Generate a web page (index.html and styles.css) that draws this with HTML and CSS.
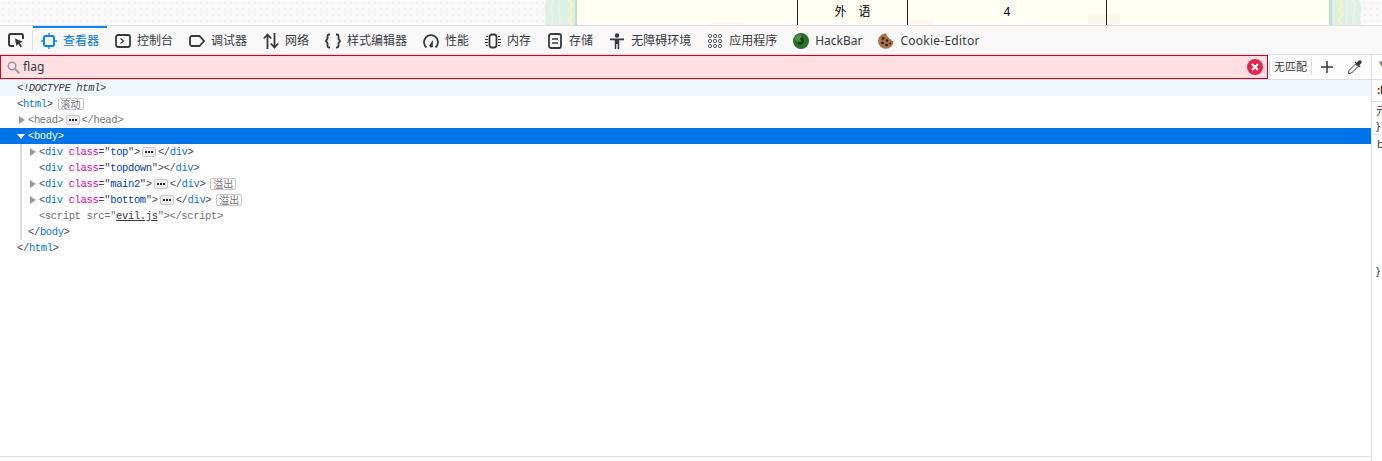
FILE: index.html
```html
<!DOCTYPE html>
<html lang="zh-CN">
<head>
<meta charset="utf-8">
<title>查看器</title>
<link rel="stylesheet" href="styles.css">
</head>
<body>
<div class="strip">
  <div class="side side-l"></div>
  <div class="band">
    <svg width="33" height="25" viewBox="0 0 33 25"><path d="M3 0C1 4 0 8 1 12s1 8 0 13h32V0z" fill="#dcf0e6"/><path d="M9 0c-2 4-2 8-1 12s1 9 0 13M16 0c-2 4-2 8-1 12s1 9 0 13" fill="none" stroke="#e6f4ec" stroke-width="2"/><path d="M25 0l3 5-3 5 3 5-3 5 3 5" fill="none" stroke="#f1f5c6" stroke-width="3"/><rect x="31" width="2" height="25" fill="#b9e2cf"/></svg>
  </div>
  <div class="sheet">
    <div class="cell cell-a"></div>
    <div class="cell cell-b"><span class="spaced">外</span><span>语</span></div>
    <div class="cell cell-c">4</div>
    <div class="cell cell-d"></div>
  </div>
  <div class="band band-r">
    <svg width="33" height="25" viewBox="0 0 33 25"><path d="M3 0C1 4 0 8 1 12s1 8 0 13h32V0z" fill="#dcf0e6"/><path d="M9 0c-2 4-2 8-1 12s1 9 0 13M16 0c-2 4-2 8-1 12s1 9 0 13" fill="none" stroke="#e6f4ec" stroke-width="2"/><path d="M23 0l-3 5 3 5-3 5 3 5-3 5" fill="none" stroke="#f1f5c6" stroke-width="3"/><rect x="30" width="3" height="25" fill="#b9e2cf"/></svg>
  </div>
  <div class="side side-r"></div>
</div>

<nav class="toolbar">
  <button class="picker" aria-label="picker">
    <svg width="16" height="16" viewBox="0 0 16 16"><path d="M6 14H3a2 2 0 0 1-2-2V4a2 2 0 0 1 2-2h10a2 2 0 0 1 2 2v3" fill="none" stroke="#38383d" stroke-width="2"/><path d="M7 6.500l8 3.200-3.200 1.300 2.200 3.200-1.600 1.100-2.200-3.200L8.300 14z" fill="#38383d"/></svg>
  </button>
  <div class="tab active">
    <svg width="16" height="16" viewBox="0 0 16 16"><rect x="3" y="3" width="10" height="10" rx="1.500" fill="none" stroke="#0a84ff" stroke-width="2"/><path d="M8 0v3M8 13v3M0 8h3M13 8h3" stroke="#0a84ff" stroke-width="1.400"/></svg>
    <span>查看器</span>
  </div>
  <div class="tab">
    <svg width="16" height="16" viewBox="0 0 16 16"><rect x="1" y="2" width="14" height="12" rx="2" fill="none" stroke="#38383d" stroke-width="1.800"/><path d="M5.500 5.500L8.500 8l-3 2.500" fill="none" stroke="#38383d" stroke-width="1.200"/></svg>
    <span>控制台</span>
  </div>
  <div class="tab">
    <svg width="16" height="16" viewBox="0 0 16 16"><path d="M3 3h7.500L15 8l-4.500 5H3a2 2 0 0 1-2-2V5a2 2 0 0 1 2-2z" fill="none" stroke="#38383d" stroke-width="1.800"/></svg>
    <span>调试器</span>
  </div>
  <div class="tab">
    <svg width="16" height="16" viewBox="0 0 16 16"><path d="M4.500 16V2M.8 5.500l3.700-4 3.700 4M11.500 0v14M7.800 10.500l3.700 4 3.700-4" fill="none" stroke="#38383d" stroke-width="1.800"/></svg>
    <span>网络</span>
  </div>
  <div class="tab">
    <svg width="16" height="16" viewBox="0 0 16 16"><path d="M5 1.500H4A1.500 1.500 0 0 0 2.500 3v3L1 8l1.500 2v3A1.500 1.500 0 0 0 4 14.500h1M11 1.500h1A1.500 1.500 0 0 1 13.500 3v3L15 8l-1.500 2v3a1.500 1.500 0 0 1-1.500 1.500h-1" fill="none" stroke="#38383d" stroke-width="1.800"/></svg>
    <span>样式编辑器</span>
  </div>
  <div class="tab">
    <svg width="16" height="16" viewBox="0 0 16 16"><path d="M3.500 14.500A7 7 0 1 1 12.500 14.500" fill="none" stroke="#38383d" stroke-width="1.800"/><path d="M6.300 12.800L9.800 7l.1 6.500a1.900 1.900 0 0 1-3.600-.7z" fill="#38383d"/></svg>
    <span>性能</span>
  </div>
  <div class="tab">
    <svg width="16" height="16" viewBox="0 0 16 16"><rect x="4.500" y="1.500" width="7" height="13" rx="2.500" fill="none" stroke="#38383d" stroke-width="1.800"/><path d="M1 3.500h2M0 6.500h3M0 9.500h3M1 12.500h2M13 3.500h2M13 6.500h3M13 9.500h3M13 12.500h2" stroke="#38383d" stroke-width="1"/></svg>
    <span>内存</span>
  </div>
  <div class="tab">
    <svg width="16" height="16" viewBox="0 0 16 16"><rect x="2" y="1" width="12" height="14" rx="2" fill="none" stroke="#38383d" stroke-width="1.800"/><path d="M5 6h6M5 10h6" stroke="#38383d" stroke-width="1.300"/></svg>
    <span>存储</span>
  </div>
  <div class="tab">
    <svg width="16" height="16" viewBox="0 0 16 16"><circle cx="8" cy="2.500" r="2.200" fill="#38383d"/><path d="M1 5.500h14v1.800H10.200V16H8.700v-5H7.300v5H5.800V7.300H1z" fill="#38383d"/></svg>
    <span>无障碍环境</span>
  </div>
  <div class="tab">
    <svg width="16" height="16" viewBox="0 0 16 16" fill="none" stroke="#38383d" stroke-width="1"><rect x="1.500" y="1.500" width="3" height="3" rx="1.200"/><rect x="6.500" y="1.500" width="3" height="3" rx="1.200"/><rect x="11.500" y="1.500" width="3" height="3" rx="1.200"/><rect x="1.500" y="6.500" width="3" height="3" rx="1.200"/><rect x="6.500" y="6.500" width="3" height="3" rx="1.200"/><rect x="11.500" y="6.500" width="3" height="3" rx="1.200"/><rect x="1.500" y="11.500" width="3" height="3" rx="1.200"/><rect x="6.500" y="11.500" width="3" height="3" rx="1.200"/><rect x="11.500" y="11.500" width="3" height="3" rx="1.200"/></svg>
    <span>应用程序</span>
  </div>
  <div class="tab">
    <svg width="16" height="16" viewBox="0 0 16 16"><circle cx="8" cy="8" r="8" fill="#2c6e2a"/><circle cx="5.500" cy="5.500" r="3.500" fill="#4a8f3c"/><path d="M4.500 8.500c2 1 4.500.5 6.500-2 .2 3-1.600 5.500-4 5.500-1 0-2-.5-2.500-1.500z" fill="#163f17"/><circle cx="9" cy="6" r="1.800" fill="#163f17"/></svg>
    <span>HackBar</span>
  </div>
  <div class="tab">
    <svg width="16" height="16" viewBox="0 0 16 16"><path d="M8.500.5A7.700 7.700 0 1 0 15.500 8c-1.300.2-2.300-.5-2.500-1.800-1.300.2-2.500-.8-2.500-2.100C9.300 3.700 8.300 2 8.500.5z" fill="#a9714a"/><circle cx="5" cy="5.500" r="1.300" fill="#2a1a12"/><circle cx="9" cy="7.500" r="1.300" fill="#2a1a12"/><circle cx="4.500" cy="10" r="1.300" fill="#2a1a12"/><circle cx="8.500" cy="12" r="1.300" fill="#2a1a12"/><circle cx="12.300" cy="10.500" r="1.100" fill="#2a1a12"/></svg>
    <span class="wide">Cookie-Editor</span>
  </div>
</nav>

<div class="workspace">
  <main class="inspector">
    <div class="searchbar">
      <div class="search">
        <svg class="search-glass" width="13" height="13" viewBox="0 0 13 13"><circle cx="5" cy="5" r="3.800" fill="none" stroke="#9a9a9e" stroke-width="1.500"/><path d="M8 8l4.200 4.200" stroke="#9a9a9e" stroke-width="2"/></svg>
        <span class="search-text">flag</span>
        <svg class="search-clear" width="16" height="16" viewBox="0 0 16 16"><circle cx="8" cy="8" r="8" fill="#e22850"/><path d="M5 5l6 6M11 5l-6 6" stroke="#fff" stroke-width="2"/></svg>
      </div>
      <div class="search-tools">
        <span class="no-match">无匹配</span>
        <svg class="plus" width="12" height="12" viewBox="0 0 12 12"><path d="M6 0v12M0 6h12" stroke="#38383d" stroke-width="1.500"/></svg>
        <svg class="dropper" width="16" height="16" viewBox="0 0 16 16"><path d="M8.500 5L2 11.500 1.500 14.500l3-.5L11 7.500z" fill="#fff" stroke="#38383d"/><path d="M7.500 3.500l5 5 1-1-1.200-1.200 2.200-2.200a1.900 1.900 0 0 0-2.600-2.600l-2.200 2.200L8.500 2.500z" fill="#38383d"/></svg>
      </div>
    </div>
    <div class="markup">
      <div class="row doctype">&lt;!DOCTYPE html&gt;</div>
      <div class="row lv0"><span class="p">&lt;</span><span class="t">html</span><span class="p">&gt;</span><span class="badge">滚动</span></div>
      <div class="row lv1 dim"><i class="twisty closed"></i>&lt;head&gt;<i class="more"></i>&lt;/head&gt;</div>
      <div class="row lv1 selected"><i class="twisty open"></i>&lt;body&gt;</div>
      <div class="children">
        <div class="row lv2"><i class="twisty closed"></i><span class="p">&lt;</span><span class="t">div</span><span class="a"> class</span><span class="p">="</span><span class="v">top</span><span class="p">"&gt;</span><i class="more"></i><span class="p">&lt;/</span><span class="t">div</span><span class="p">&gt;</span></div>
        <div class="row lv2"><span class="p">&lt;</span><span class="t">div</span><span class="a"> class</span><span class="p">="</span><span class="v">topdown</span><span class="p">"&gt;&lt;/</span><span class="t">div</span><span class="p">&gt;</span></div>
        <div class="row lv2"><i class="twisty closed"></i><span class="p">&lt;</span><span class="t">div</span><span class="a"> class</span><span class="p">="</span><span class="v">main2</span><span class="p">"&gt;</span><i class="more"></i><span class="p">&lt;/</span><span class="t">div</span><span class="p">&gt;</span><span class="badge">溢出</span></div>
        <div class="row lv2"><i class="twisty closed"></i><span class="p">&lt;</span><span class="t">div</span><span class="a"> class</span><span class="p">="</span><span class="v">bottom</span><span class="p">"&gt;</span><i class="more"></i><span class="p">&lt;/</span><span class="t">div</span><span class="p">&gt;</span><span class="badge">溢出</span></div>
        <div class="row lv2 dim">&lt;script src="<span class="link">evil.js</span>"&gt;&lt;/script&gt;</div>
        <div class="row lv1b"><span class="p">&lt;/</span><span class="t">body</span><span class="p">&gt;</span></div>
      </div>
      <div class="row lv0"><span class="p">&lt;/</span><span class="t">html</span><span class="p">&gt;</span></div>
    </div>
    <div class="footer"></div>
  </main>
  <aside class="rules">
    <div class="rules-head"><span class="caret">▾</span></div>
    <div class="rules-filter">:hov</div>
    <div class="rules-block">元素 {<br>}</div>
    <div class="rules-body">body {</div>
    <div class="rules-end">}</div>
  </aside>
</div>
</body>
</html>
```

FILE: styles.css
```css
* { box-sizing: border-box; }
html, body { margin: 0; height: 461px; overflow: hidden; background: #fff; }
body {
  display: flex;
  flex-direction: column;
  font-family: "Noto Sans", "Noto Sans CJK SC", sans-serif;
  font-size: 12px;
  color: #38383d;
}

/* page peeking out above devtools */
.strip {
  display: flex;
  height: 26px;
  flex: none;
  border-bottom: 1px solid #e0e0e1;
  background-color: #f9f9f9;
  background-image: radial-gradient(circle, #f1f1f1 1px, transparent 1.2px);
  background-size: 6px 6px;
}
.side-l { width: 544px; }
.side-r { flex: 1; }
.band { width: 33px; height: 25px; }
.band svg { display: block; }
.band-r svg { transform: scaleX(-1); }
.sheet {
  width: 752px;
  display: flex;
  background-color: #fffff4;
  background-image:
    linear-gradient(#f8f8ee, #f8f8ee),
    linear-gradient(#f8f8ee, #f8f8ee),
    linear-gradient(#f8f8ee, #f8f8ee);
  background-repeat: no-repeat;
  background-size: 34px 2px, 26px 5px, 32px 11px;
  background-position: 133px 23px, 331px 20px, 511px 14px;
}
.cell { height: 25px; display: flex; align-items: center; justify-content: center; color: #000; font-size: 12px; padding-bottom: 3px; }
.cell-a { width: 220px; }
.cell-b { width: 110px; border-left: 1px solid #222; }
.cell-c { width: 199px; border-left: 1px solid #222; }
.cell-d { flex: 1; border-left: 1px solid #222; }
.spaced { margin-right: 12px; }

/* toolbar */
.toolbar {
  flex: none;
  height: 29px;
  display: flex;
  background: #f9f9fa;
  border-bottom: 1px solid #e0e0e1;
}
.picker {
  width: 33px;
  padding: 0 0 0 8px;
  border: 0;
  background: none;
  display: flex;
  align-items: center;
  position: relative;
}
.picker::after {
  content: "";
  position: absolute;
  right: 0;
  top: 4px;
  bottom: 4px;
  width: 1px;
  background: #e0e0e1;
}
.tab {
  display: flex;
  align-items: center;
  gap: 6px;
  padding: 0 8px;
  border-top: 2px solid transparent;
  white-space: nowrap;
  color: #38383d;
  line-height: 16px;
}
.tab svg { flex: none; }
.tab.active { color: #0074e8; border-top-color: #0a84ff; }
.wide { letter-spacing: 0.25px; }

/* inspector layout */
.workspace { flex: 1; display: flex; min-height: 0; }
.inspector { width: 1371px; flex: none; display: flex; flex-direction: column; }
.searchbar {
  flex: none;
  height: 25px;
  display: flex;
  border-bottom: 1px solid #e0e0e1;
  background: #fcfcfc;
}
.search {
  width: 1268px;
  height: 24px;
  display: flex;
  align-items: center;
  background: #ffe0e2;
  border: 1px solid #d70022;
  padding: 0 4px 0 6px;
}
.search-text { margin-left: 3px; flex: 1; color: #38383d; font-size: 12px; line-height: 16px; padding-bottom: 1px; }
.search-tools { flex: 1; display: flex; align-items: center; height: 24px; }
.no-match {
  font-size: 11px;
  height: 16px;
  line-height: 16px;
  padding: 0 4px;
  margin-left: 1px;
  border-left: 1px solid #e0e0e1;
  border-right: 1px solid #e0e0e1;
  width: 43px;
  white-space: nowrap;
  color: #38383d;
}
.plus { margin-left: 9px; }
.dropper { margin-left: 14px; }

/* markup */
.markup {
  flex: 1;
  font-family: "Liberation Mono", monospace;
  font-size: 10.5px;
  letter-spacing: -0.37px;
  color: #4a4a4f;
}
.row { height: 16px; line-height: 16px; white-space: pre; display: flex; align-items: center; }
.doctype { padding-left: 17px; background: #f0f9fe; font-style: italic; color: #38383d; }
.lv0 { padding-left: 17px; }
.lv1 { padding-left: 28px; }
.lv2 { padding-left: 17px; }
.lv1b { padding-left: 6px; }
.children { margin-left: 20px; border-left: 2px solid #dddddd; }
.dim { color: #737373; }
.selected { background: #0074e8; color: #fff; }
.p { color: #4a4a4f; }
.t { color: #0074e8; }
.a { color: #dd00a9; }
.v { color: #003eaa; }
.link { text-decoration: underline; color: #38383d; }
.twisty { width: 0; height: 0; flex: none; }
.twisty.closed {
  margin-left: -9px;
  margin-right: 3px;
  border-left: 6px solid #9a9a9e;
  border-top: 4.5px solid transparent;
  border-bottom: 4.5px solid transparent;
}
.twisty.open {
  margin-left: -11px;
  margin-right: 3px;
  border-top: 5px solid #fff;
  border-left: 4px solid transparent;
  border-right: 4px solid transparent;
}
.more {
  flex: none;
  width: 14px;
  height: 10px;
  margin: 0 2px;
  border: 1px solid #c8c8cc;
  border-radius: 2px;
  background-color: #eeeef0;
  background-image:
    linear-gradient(#2a2a2e, #2a2a2e),
    linear-gradient(#2a2a2e, #2a2a2e),
    linear-gradient(#2a2a2e, #2a2a2e);
  background-size: 2px 2px;
  background-repeat: no-repeat;
  background-position: 2px 3px, 5px 3px, 8px 3px;
}
.badge {
  height: 12px;
  margin-left: 5px;
  padding: 0 2px;
  border: 1px solid #c8c8cc;
  border-radius: 2px;
  font-family: "Noto Sans CJK SC", sans-serif;
  font-size: 10px;
  letter-spacing: 0;
  line-height: 10px;
  color: #737373;
}
.footer { flex: none; height: 5px; border-top: 1px solid #e0e0e1; }

/* rules side panel */
.rules {
  flex: 1;
  min-width: 0;
  overflow: hidden;
  border-left: 1px solid #e0e0e1;
  white-space: nowrap;
  font-family: "Noto Sans", "Noto Sans CJK SC", sans-serif;
  font-size: 11px;
  line-height: 15px;
}
.rules-head { height: 25px; padding-left: 7px; border-bottom: 1px solid #e0e0e1; color: #737373; line-height: 16px; }
.rules-filter { height: 22px; padding: 2px 0 0 5px; border-bottom: 1px solid #e0e0e1; font-weight: 700; }
.rules-block { height: 33px; padding: 1px 0 0 4px; border-bottom: 1px solid #e0e0e1; }
.rules-body { height: 128px; padding: 1px 0 0 5px; }
.rules-end { padding-left: 4px; }
```
